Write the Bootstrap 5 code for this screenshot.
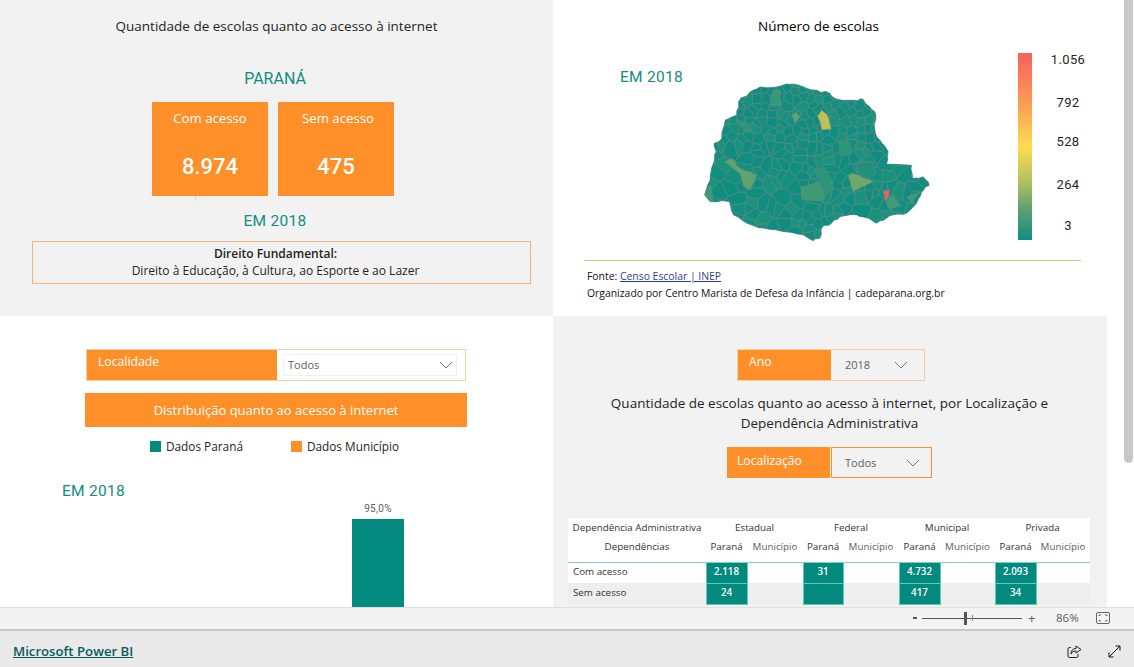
<!DOCTYPE html>
<html lang="pt-BR">
<head>
    <meta charset="UTF-8">
    <title>Microsoft Power BI</title>
    <link rel="stylesheet" href="https://cdn.jsdelivr.net/npm/bootstrap@5.3.0/dist/css/bootstrap.min.css">
    <style>
        html, body { height: 667px; overflow: hidden; }
        body { font-family: "Open Sans", "Liberation Sans", sans-serif; color: #252423; background: #fff; }

        .report-wrap { height: 607px; overflow: hidden; }
        .report { width: 1107px; display: grid; grid-template-columns: 553px 554px; grid-template-rows: 316px 291px; }
        .quad { overflow: hidden; }
        .quad-grey { background: #f2f2f2; }
        .scroll-track { width: 27px; }
        .scroll-thumb { width: 9px; height: 463px; margin-left: 17px; background: #c8c8c8; border-radius: 0 0 5px 5px; }

        .din { font-family: Roboto, "Liberation Sans", sans-serif; }
        .teal { color: #118d80; }
        .chart-title { font-size: 13.5px; line-height: 18px; }

        /* top left */
        .tl-title { padding-top: 17px; width: 553px; }
        .state-name { margin: 32px 0 0 -3px; font-size: 16px; line-height: 24px; }
        .kpi-row { margin: 11px 0 0 152px; gap: 10px; }
        .kpi { width: 116px; height: 94px; background: #ff9029; color: #fff; padding-top: 6px; position: relative; }
        .kpi-first::after { content: ""; position: absolute; left: 43px; top: 94px; width: 1px; height: 5px; background: #f6cfa4; }
        .kpi-label { font-size: 13.2px; line-height: 20px; }
        .kpi-label-shift { padding-left: 4px; }
        .kpi-value { font-size: 22px; line-height: 30px; font-weight: 500; margin-top: 24px; }
        .year-mid { margin: 13px 0 0 -3px; font-size: 15.5px; line-height: 24px; letter-spacing: .3px; }
        .right-box { margin: 8px 0 0 32px; width: 499px; height: 43px; border: 1px solid #f9b27a; font-size: 12px; line-height: 17px; padding: 3px 12px 0 0; }

        /* top right */
        .tr-title { padding-top: 17px; padding-left: 1px; color: #000; width: 530px; }
        .map-row { margin-top: 9px; height: 198px; }
        .year-map { margin: 21px 0 0 67px; width: 70px; font-size: 15.5px; line-height: 24px; letter-spacing: .3px; flex: none; }
        .map-box { width: 240px; height: 198px; flex: none; margin-left: 10px; }
        .scale-bar { width: 14px; height: 187px; margin: 9px 0 0 78px; flex: none; background: linear-gradient(#f8605f 0%, #fb9c56 27%, #fddd4f 50%, #b5c25f 68%, #5d9f72 84%, #118d80 100%); }
        .scale-labels { width: 72px; height: 198px; flex: none; font-size: 13px; line-height: 20px; color: #252423; letter-spacing: .4px; }
        .label-1 { margin-top: 6px; }
        .label-2 { margin-top: 23px; }
        .label-3 { margin-top: 19px; }
        .label-4 { margin-top: 23px; }
        .label-5 { margin-top: 21px; }
        .src-line { margin: 18px 0 0 31px; width: 497px; border-top: 1px solid #e5bb7d; padding: 7px 0 0 3px; font-size: 10.4px; line-height: 17px; color: #111; }
        .src-line a { color: #2c3e9e; }

        /* slicers */
        .slicer { height: 30px; box-shadow: 0 0 0 1px #f3cfa8; }
        .slicer-name { background: #ff9029; color: #fff; font-size: 12.2px; line-height: 24px; padding-left: 11px; flex: none; }
        .slicer-box { padding: 4px 8px 3px 6px; background: #fff; flex: none; }
        .slicer-box-grey { background: #f2f2f2; }
        .slicer-field { font-size: 11px; color: #605e5c; padding: 0 3px 0 4px; line-height: 22px; height: 22px; border: 1px solid #f1f1f1; }

        /* bottom left */
        .slicer-local { margin: 34px 0 0 87px; width: 378px; }
        .slicer-local .slicer-name { width: 190px; }
        .slicer-local .slicer-box { width: 188px; }
        .banner { margin: 13px 0 0 85px; width: 382px; height: 34px; background: #ff9029; color: #fff; font-size: 13px; line-height: 34px; }
        .legend-row { margin: 10px 0 0 150px; height: 18px; font-size: 11.8px; line-height: 18px; }
        .legend-mark { width: 11px; height: 11px; margin-right: 5px; flex: none; }
        .mark-teal { background: #018a7d; }
        .mark-orange { background: #ff9029; }
        .legend-gap { width: 48px; }
        .year-chart { margin: 24px 0 0 62px; font-size: 15.5px; line-height: 24px; letter-spacing: .3px; height: 24px; }
        .bar-label { width: 52px; margin: -2px 0 0 352px; font-size: 10px; line-height: 16px; color: #605e5c; letter-spacing: .3px; }
        .bar-teal { width: 52px; height: 120px; margin: 2px 0 0 352px; background: #018a7d; }

        /* bottom right */
        .slicer-year { margin: 34px 0 0 185px; width: 186px; }
        .slicer-year .slicer-name { width: 93px; }
        .slicer-year .slicer-box { width: 93px; padding: 4px 12px 3px 9px; }
        .table-title { margin-top: 13px; width: 554px; color: #252423; line-height: 20px; }
        .title-inner { margin-left: -1px; }
        .slicer-where { margin: 14px 0 0 174px; height: 31px; width: 205px; box-shadow: none; }
        .slicer-where .slicer-name { width: 103px; line-height: 28px; padding-left: 10px; }
        .slicer-where .slicer-box { width: 101px; margin-left: 1px; border: 1px solid #ff9029; padding: 3px 7px 3px 8px; background: #f2f2f2; }
        .slicer-where .slicer-field { height: 23px; line-height: 23px; }

        .table-wrap { margin: 40px 0 0 15px; width: 522px; }
        .matrix { table-layout: fixed; width: 522px; margin: 0; font-size: 9.8px; --bs-table-bg: transparent; }
        .matrix th, .matrix td { padding: 0; border: 0; font-weight: 400; text-align: center; vertical-align: middle; white-space: nowrap; overflow: hidden; color: #333; background: #fff; }
        .matrix .row-h1 th { height: 20px; }
        .matrix .row-h2 th { height: 24px; padding-bottom: 4px; border-bottom: 1px solid #7fd0c8; }
        .matrix .row-a td { height: 21px; }
        .matrix .row-b td { height: 21px; background: #eee; }
        .matrix td.row-name { text-align: left; padding-left: 5px; }
        .matrix td.cell-teal { background: #018a7d; color: #fff; font-weight: 600; border: 1px solid #6cc2b8; border-top: 0; }
        .matrix th.muted-col { color: #605e5c; }
        .w-a { width: 138px; } .w-b { width: 41px; } .w-c { width: 56px; } .w-d { width: 40px; } .w-e { width: 55px; } .w-f { width: 54px; }

        /* bottom bars */
        .status-bar { height: 24px; background: #f3f3f3; border-top: 1px solid #e0e0e0; border-bottom: 2px solid #c8c8c8; font-size: 11.5px; color: #605e5c; padding-bottom: 1px; }
        .zoom-minus { width: 4px; height: 2px; background: #555; margin-left: 913px; flex: none; }
        .zoom-track { width: 100px; height: 1px; background: #555; margin-left: 5px; flex: none; position: relative; }
        .zoom-thumb { position: absolute; left: 42px; top: -6px; width: 3px; height: 13px; background: #555; }
        .zoom-mark { position: absolute; left: 50px; top: -3px; width: 1px; height: 6px; background: #888; }
        .zoom-plus { margin-left: 6px; width: 10px; font-size: 13px; line-height: 14px; }
        .zoom-pct { margin-left: 18px; width: 26px; }
        .zoom-fit { margin-left: 14px; }
        .footer-bar { height: 36px; background: #e9e9e9; padding: 5px 13px 0; }
        .footer-link { color: #0b5a5c; font-size: 13.2px; font-weight: 600; text-decoration: underline; }
        .footer-gap { gap: 26px; }
    </style>
</head>
<body>
<div class="d-flex report-wrap">
    <div class="report">
        <!-- top left -->
        <section class="quad quad-grey">
            <div class="tl-title chart-title text-center">Quantidade de escolas quanto ao acesso à internet</div>
            <div class="state-name text-center teal din">PARANÁ</div>
            <div class="d-flex kpi-row">
                <div class="kpi kpi-first text-center">
                    <div class="kpi-label">Com acesso</div>
                    <div class="kpi-value din">8.974</div>
                </div>
                <div class="kpi text-center">
                    <div class="kpi-label kpi-label-shift">Sem acesso</div>
                    <div class="kpi-value din">475</div>
                </div>
            </div>
            <div class="year-mid text-center teal din">EM 2018</div>
            <div class="right-box text-center">
                <div class="fw-semibold">Direito Fundamental:</div>
                <div>Direito à Educação, à Cultura, ao Esporte e ao Lazer</div>
            </div>
        </section>

        <!-- top right -->
        <section class="quad">
            <div class="tr-title chart-title text-center">Número de escolas</div>
            <div class="d-flex map-row">
                <div class="year-map teal din">EM 2018</div>
                <div class="map-box">
                    <svg id="prMap" width="240" height="198" viewBox="30 12 720 594" xmlns="http://www.w3.org/2000/svg">
                        <defs><clipPath id="prClip"><polygon id="prShape"/></clipPath></defs>
                        <g id="prCells" clip-path="url(#prClip)"></g>
                    </svg>
                </div>
                <div class="scale-bar"></div>
                <div class="scale-labels din d-flex flex-column text-center">
                    <span class="label-1">1.056</span>
                    <span class="label-2">792</span>
                    <span class="label-3">528</span>
                    <span class="label-4">264</span>
                    <span class="label-5">3</span>
                </div>
            </div>
            <div class="src-line">
                <div>Fonte: <a href="#">Censo Escolar | INEP</a></div>
                <div>Organizado por Centro Marista de Defesa da Infância | cadeparana.org.br</div>
            </div>
        </section>

        <!-- bottom left -->
        <section class="quad">
            <div class="d-flex slicer slicer-local">
                <div class="slicer-name">Localidade</div>
                <div class="slicer-box">
                    <div class="slicer-field d-flex justify-content-between align-items-center">Todos
                        <svg width="14" height="8" viewBox="0 0 14 8"><path d="M1 1l6 6 6-6" fill="none" stroke="#777" stroke-width="1"/></svg>
                    </div>
                </div>
            </div>
            <div class="banner text-center">Distribuição quanto ao acesso à internet</div>
            <div class="d-flex align-items-center legend-row">
                <span class="legend-mark mark-teal"></span><span>Dados Paraná</span>
                <span class="legend-gap"></span>
                <span class="legend-mark mark-orange"></span><span>Dados Município</span>
            </div>
            <div class="year-chart teal din">EM 2018</div>
            <div class="bar-label text-center din">95,0%</div>
            <div class="bar-teal"></div>
        </section>

        <!-- bottom right -->
        <section class="quad quad-grey">
            <div class="d-flex slicer slicer-year">
                <div class="slicer-name">Ano</div>
                <div class="slicer-box slicer-box-grey">
                    <div class="slicer-field d-flex justify-content-between align-items-center">2018
                        <svg width="14" height="8" viewBox="0 0 14 8"><path d="M1 1l6 6 6-6" fill="none" stroke="#777" stroke-width="1"/></svg>
                    </div>
                </div>
            </div>
            <div class="table-title chart-title text-center"><div class="title-inner">Quantidade de escolas quanto ao acesso à internet, por Localização e<br>Dependência Administrativa</div></div>
            <div class="d-flex slicer slicer-where">
                <div class="slicer-name">Localização</div>
                <div class="slicer-box">
                    <div class="slicer-field d-flex justify-content-between align-items-center">Todos
                        <svg width="14" height="8" viewBox="0 0 14 8"><path d="M1 1l6 6 6-6" fill="none" stroke="#777" stroke-width="1"/></svg>
                    </div>
                </div>
            </div>
            <div class="table-wrap">
                <table class="table matrix">
                    <colgroup>
                        <col class="w-a"><col class="w-b"><col class="w-c"><col class="w-d"><col class="w-c"><col class="w-b"><col class="w-e"><col class="w-b"><col class="w-f">
                    </colgroup>
                    <thead>
                        <tr class="row-h1">
                            <th>Dependência Administrativa</th>
                            <th colspan="2">Estadual</th>
                            <th colspan="2">Federal</th>
                            <th colspan="2">Municipal</th>
                            <th colspan="2">Privada</th>
                        </tr>
                        <tr class="row-h2">
                            <th>Dependências</th>
                            <th>Paraná</th><th class="muted-col">Município</th>
                            <th>Paraná</th><th class="muted-col">Município</th>
                            <th>Paraná</th><th class="muted-col">Município</th>
                            <th>Paraná</th><th class="muted-col">Município</th>
                        </tr>
                    </thead>
                    <tbody>
                        <tr class="row-a">
                            <td class="row-name">Com acesso</td>
                            <td class="cell-teal">2.118</td><td></td>
                            <td class="cell-teal">31</td><td></td>
                            <td class="cell-teal">4.732</td><td></td>
                            <td class="cell-teal">2.093</td><td></td>
                        </tr>
                        <tr class="row-b">
                            <td class="row-name">Sem acesso</td>
                            <td class="cell-teal">24</td><td></td>
                            <td class="cell-teal"></td><td></td>
                            <td class="cell-teal">417</td><td></td>
                            <td class="cell-teal">34</td><td></td>
                        </tr>
                    </tbody>
                </table>
            </div>
        </section>
    </div>
    <div class="scroll-track"><div class="scroll-thumb"></div></div>
</div>

<div class="status-bar d-flex align-items-center">
    <span class="zoom-minus"></span>
    <div class="zoom-track"><span class="zoom-thumb"></span><span class="zoom-mark"></span></div>
    <span class="zoom-plus">+</span>
    <span class="zoom-pct">86%</span>
    <svg class="zoom-fit" width="14" height="12" viewBox="0 0 14 12"><rect x=".5" y=".5" width="13" height="11" rx="1.500" fill="none" stroke="#666"/><path d="M3 4V3h2M9 3h2v1M11 8v1H9M5 9H3V8" fill="none" stroke="#666"/></svg>
</div>
<div class="footer-bar d-flex justify-content-between align-items-center">
    <a class="footer-link" href="#">Microsoft Power BI</a>
    <div class="d-flex align-items-center footer-gap">
        <svg width="15" height="14" viewBox="0 0 15 14"><path d="M4 2.500H2.500a1.500 1.500 0 0 0-1.500 1.500v7a1.500 1.500 0 0 0 1.500 1.500h7a1.500 1.500 0 0 0 1.500-1.500V9" fill="none" stroke="#222"/><path d="M9 1l5 3.500L9 8V6C6.500 6 5 7 4 9c0-3.500 2-5.500 5-5.500z" fill="none" stroke="#222"/></svg>
        <svg width="13" height="13" viewBox="0 0 13 13"><path d="M1 12L12 1M7.500 1H12v4.500M1 7.500V12h4.500" fill="none" stroke="#111"/></svg>
    </div>
</div>

<script>
// municipalities: voronoi cells from scattered seeds, clipped to the state's outline
let seed = 17;
const rnd = () => (seed = (seed * 16807) % 2147483647) / 2147483647;
// break each edge up a little so borders look surveyed rather than ruled
function rough(poly, amp) {
    const out = [];
    poly.forEach((u, i) => {
        const v = poly[(i + 1) % poly.length];
        out.push(u);
        for (let k = 1; k < 3; k++) {
            out.push([u[0] + (v[0] - u[0]) * k / 3 + (rnd() - .5) * amp, u[1] + (v[1] - u[1]) * k / 3 + (rnd() - .5) * amp]);
        }
    });
    return out;
}
const join = poly => poly.map(c => c.map(n => n.toFixed(1)).join(',')).join(' ');

const outline = rough([[145,185],[180,155],[210,140],[260,140],[300,132],[340,140],[380,150],[420,160],[445,178],[490,180],[520,178],[540,200],[558,225],[555,270],[570,300],[595,335],[590,372],[665,375],[668,415],[700,410],[718,437],[695,455],[680,490],[650,520],[610,525],[590,535],[560,550],[535,535],[500,525],[450,530],[425,550],[395,565],[390,595],[370,603],[340,585],[280,575],[220,565],[170,550],[130,525],[118,485],[60,485],[43,465],[60,420],[70,370],[78,335],[72,310],[95,295],[105,240],[140,225]], 7);
const pts = join(outline);
document.getElementById('prShape').setAttribute('points', pts);

const seeds = [];
for (let x = 30; x < 730; x += 24) for (let y = 125; y < 610; y += 24) {
    if (rnd() < (y < 330 ? .95 : .55)) seeds.push([x + (rnd() - .5) * 20, y + (rnd() - .5) * 20]);
}
// keep the part of a polygon on p's side of the p/q bisector
function cut(poly, p, q) {
    const a = q[0] - p[0], b = q[1] - p[1], c = (q[0] * q[0] + q[1] * q[1] - p[0] * p[0] - p[1] * p[1]) / 2;
    const out = [];
    poly.forEach((u, i) => {
        const v = poly[(i + 1) % poly.length], du = a * u[0] + b * u[1] - c, dv = a * v[0] + b * v[1] - c;
        if (du <= 0) out.push(u);
        if (du * dv < 0) { const t = du / (du - dv); out.push([u[0] + (v[0] - u[0]) * t, u[1] + (v[1] - u[1]) * t]); }
    });
    return out;
}
const fills = ['#0f8e7f', '#108f80', '#14907e', '#0e8d80', '#1a937d'];
let cells = `<polygon points="${pts}" fill="#0f8e7f"/>`;
seeds.forEach(p => {
    let poly = [[0, 60], [780, 60], [780, 660], [0, 660]];
    seeds.forEach(q => {
        if (q !== p && Math.hypot(q[0] - p[0], q[1] - p[1]) < 130) poly = cut(poly, p, q);
    });
    if (poly.length) cells += `<polygon points="${join(poly)}" fill="${fills[Math.floor(rnd() * fills.length)]}" stroke="#6f8886" stroke-width="1.800"/>`;
});
// larger towns
const towns = [
    ['#bcc354', [[382,228],[395,210],[410,222],[424,268],[395,270]]],
    ['#5da56e', [[303,228],[318,214],[330,228],[315,248]]],
    ['#359a78', [[248,150],[272,148],[272,198],[240,198]]],
    ['#2d9578', [[140,240],[170,250],[190,280],[160,270]]],
    ['#5fa36e', [[105,365],[125,355],[150,385],[200,405],[180,450],[160,440],[148,400]]],
    ['#3d9c74', [[45,455],[62,435],[70,485],[48,478]]],
    ['#3f9b72', [[335,440],[385,425],[405,470],[395,482],[335,478]]],
    ['#2c9678', [[375,395],[405,385],[430,440],[410,460]]],
    ['#6fa968', [[475,405],[490,400],[515,410],[548,425],[515,440],[490,455]]],
    ['#1f917b', [[500,370],[545,365],[560,400],[530,415],[500,395]]],
    ['#2a9678', [[445,308],[480,308],[482,345],[450,345]]],
    ['#3f9c74', [[590,480],[610,465],[632,498],[595,505]]],
    ['#3d9b74', [[650,470],[690,455],[665,490]]]
];
towns.forEach(t => cells += `<polygon points="${join(rough(t[1], 5))}" fill="${t[0]}" stroke="#6f8886" stroke-width="1.800"/>`);
cells += '<polygon points="580,453 598,450 596,470 586,484" fill="#f8605f" stroke="#6f8886" stroke-width="1"/>';
document.getElementById('prCells').innerHTML = cells;
document.getElementById('prMap').insertAdjacentHTML('beforeend', `<polygon points="${pts}" fill="none" stroke="#6f8886" stroke-width="1.200"/>`);
</script>
<script src="https://cdn.jsdelivr.net/npm/bootstrap@5.3.0/dist/js/bootstrap.bundle.min.js"></script>
</body>
</html>
